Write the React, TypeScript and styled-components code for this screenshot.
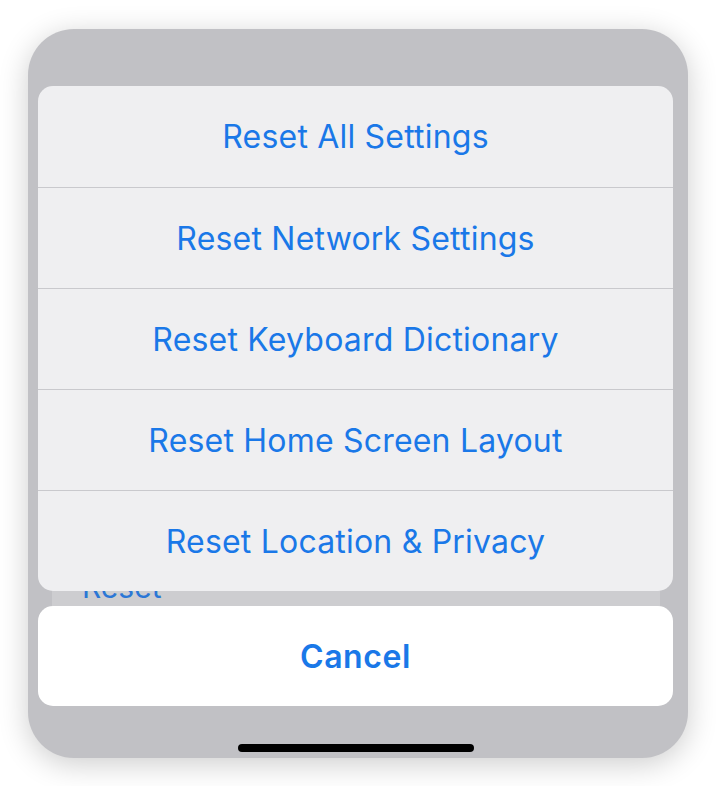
import React from 'react';
import styled, { createGlobalStyle } from 'styled-components';

const actions = [
  'Reset All Settings',
  'Reset Network Settings',
  'Reset Keyboard Dictionary',
  'Reset Home Screen Layout',
  'Reset Location & Privacy',
];

const App = () => {
  return (
    <>
      <GlobalStyle />
      <Page>
        <Phone>
          <Backdrop>
            <SettingsCard>
              <SettingsRow>Reset</SettingsRow>
            </SettingsCard>
          </Backdrop>
          <Sheet>
            <ActionGroup>
              {actions.map((label, index) => (
                <ActionRow key={index} first={index === 0}>
                  {label}
                </ActionRow>
              ))}
            </ActionGroup>
            <CancelButton>Cancel</CancelButton>
            <HomeBar>
              <HomeIndicator />
            </HomeBar>
          </Sheet>
        </Phone>
      </Page>
    </>
  );
};
export default App;

const GlobalStyle = createGlobalStyle`
  html, body {
    margin: 0;
    padding: 0;
    background: #ffffff;
  }
  body {
    font-family: Inter, "Noto Sans", "Liberation Sans", sans-serif;
    -webkit-font-smoothing: antialiased;
  }
`;

export const Page = styled.div`
  width: 716px;
  height: 786px;
  padding: 29px 28px 28px 28px;
  box-sizing: border-box;
`;

export const Phone = styled.div`
  display: grid;
  width: 660px;
  height: 729px;
  border-radius: 46px;
  background-color: #c1c1c5;
  box-shadow: 0 6px 30px rgba(0, 0, 0, 0.2);
  overflow: hidden;

  & > * {
    grid-area: 1 / 1;
  }
`;

export const Backdrop = styled.div`
  display: flex;
  flex-direction: column;
  padding: 510px 28px 0 24px;
`;

export const SettingsCard = styled.div`
  background-color: #cdcdd0;
  border-radius: 12px;
  height: 140px;
`;

export const SettingsRow = styled.div`
  padding: 30px 0 0 30px;
  font-size: 30px;
  line-height: 36px;
  color: #2b77d6;
`;

export const Sheet = styled.div`
  display: flex;
  flex-direction: column;
  padding: 57px 15px 0 10px;
  gap: 15px;
`;

export const ActionGroup = styled.div`
  display: flex;
  flex-direction: column;
  background-color: #efeff1;
  border-radius: 15px;
  overflow: hidden;
`;

export const ActionRow = styled.div<{ first?: boolean }>`
  display: flex;
  align-items: center;
  justify-content: center;
  height: 101px;
  box-sizing: border-box;
  border-top: ${(p) => (p.first ? 'none' : '1px solid #c9c9cd')};
  font-size: 32px;
  letter-spacing: 0.2px;
  color: #1a78e8;
`;

export const CancelButton = styled.div`
  display: flex;
  align-items: center;
  justify-content: center;
  height: 100px;
  border-radius: 15px;
  background-color: #ffffff;
  font-size: 32px;
  font-weight: 600;
  letter-spacing: 0.6px;
  color: #1a78e8;
`;

export const HomeBar = styled.div`
  display: flex;
  justify-content: center;
  padding-top: 23px;
`;

export const HomeIndicator = styled.div`
  width: 236px;
  height: 8px;
  border-radius: 4px;
  background-color: #000000;
`;
